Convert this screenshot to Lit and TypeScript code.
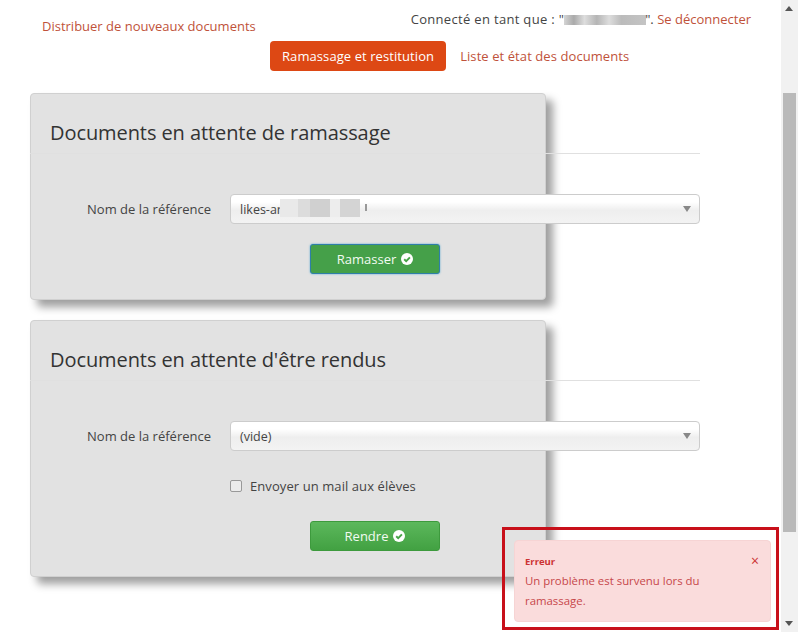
import { LitElement, html, css, svg } from "lit";
import { customElement } from "lit/decorators.js";

const check = svg`<svg class="chk" viewBox="0 0 12 12" width="12" height="12" aria-hidden="true"><circle cx="6" cy="6" r="6" fill="#fff"/><path d="M3.2 6.2 5.2 8.1 8.9 4.3" fill="none" stroke="currentColor" stroke-width="1.9"/></svg>`;

@customElement("app-root")
export class AppRoot extends LitElement {
  static styles = css`
    :host { display: block; height: 632px; overflow: hidden; position: relative; background: #fff; font-family: "Open Sans", "Noto Sans", sans-serif; font-size: 13px; color: #444; }
    * { box-sizing: border-box; }
    a { color: #c0523a; text-decoration: none; }
    .page { width: 781px; padding: 0 30px; }
    .top { display: flex; justify-content: space-between; height: 41px; }
    .top .left { margin: 16px 0 0 12px; line-height: 20px; }
    .top .right { margin: 9px 0 0; line-height: 20px; white-space: nowrap; }
    .who { letter-spacing: 0.32px; }
    .blur { display: inline-block; width: 82px; height: 10px; vertical-align: -1px; margin-right: -1px; background: linear-gradient(90deg,#d4d4d4,#aaa 12%,#ddd 25%,#b5b5b5 40%,#ddd 55%,#bbb 70%,#c4c4c4 100%); }
    .nav { display: flex; align-items: center; margin-left: 240px; height: 30px; gap: 14px; letter-spacing: 0.08px; }
    .pill { background: #dd4814; color: #fff; border-radius: 4px; height: 30px; padding: 0 12px; display: flex; align-items: center; }
    .form { position: relative; width: 670px; }
    .form.one { margin-top: 22px; height: 227px; }
    .form.two { height: 257px; }
    .card { position: absolute; left: 0; top: 0; width: 516px; background: #e2e2e2; border: 1px solid #d0d0d0; border-radius: 4px; box-shadow: 7px 7px 8px rgba(0,0,0,.38); }
    .one .card { height: 207px; }
    .two .card { height: 257px; }
    .body { position: relative; display: flex; flex-direction: column; }
    h2 { margin: 0; padding: 22px 0 0 20px; height: 61px; border-bottom: 1px solid #e0e0e0; font-weight: 400; font-size: 20px; line-height: 36px; color: #333; letter-spacing: -0.08px; }
    .row { display: flex; align-items: center; margin-top: 40px; height: 30px; }
    .row label { width: 200px; text-align: right; padding-right: 19px; flex: none; }
    .sel { flex: 1; height: 30px; border: 1px solid #ccc; border-radius: 4px; background: linear-gradient(#fff 25%, #eee 55%, #f3f3f3); padding: 0 8px 0 9px; display: flex; align-items: center; justify-content: space-between; font-size: 12.5px; position: relative; }
    .mask { position: absolute; left: 49px; top: 4px; width: 80px; height: 18px; background: linear-gradient(90deg,#e9e9e9 0 22%,#dcdcdc 22% 38%,#d0d0d0 38% 62%,#ededed 62% 75%,#d4d4d4 75%); }
    .mask::after { content: ""; position: absolute; left: 85px; top: 5px; width: 2px; height: 7px; background: #999; }
    .caret { width: 0; height: 0; border: 4px solid transparent; border-top: 6px solid #888; border-bottom: 0; }
    .chkrow { display: flex; align-items: center; gap: 8px; margin: 25px 0 0 200px; height: 20px; letter-spacing: 0.08px; }
    .box { width: 12px; height: 12px; border: 1px solid #999; border-radius: 2px; background: #ececec; }
    .act { margin-left: 280px; }
    .btn { width: 130px; height: 30px; border-radius: 3px; color: #f2fbf2; display: flex; align-items: center; justify-content: center; gap: 5px; background: linear-gradient(#5cb85c, #42a142); border: 1px solid #3d9a3d; }
    .btn .chk { color: #46a346; }
    .focus { background: #45a049; border: 1px solid #2f7fa8; box-shadow: 0 0 2px #4aa3d0; }
    .one .act { margin-top: 20px; }
    .two .act { margin-top: 25px; }
    .scroll { position: absolute; right: 0; top: 0; width: 17px; height: 632px; background: #f1f1f1; }
    .thumb { position: absolute; left: 2px; top: 93px; width: 13px; height: 439px; background: #b9b9b9; }
    .up, .down { position: absolute; left: 4px; width: 0; height: 0; border: 4px solid transparent; }
    .up { top: 6px; border-top: 0; border-bottom: 5px solid #555; }
    .down { bottom: 6px; border-bottom: 0; border-top: 5px solid #555; }
    .callout { position: absolute; left: 502px; top: 527px; width: 277px; height: 103px; border: 3px solid #c8101a; }
    .toast { position: absolute; left: 9px; top: 10px; width: 257px; height: 82px; padding: 10px 10px; background: #fadcdc; border: 1px solid #f6d4d4; border-radius: 4px; color: #c7474a; font-size: 11.4px; line-height: 20px; }
    .toast b { display: block; font-size: 9.5px; line-height: 19px; padding-top: 1px; font-weight: 700; color: #c33; }
    .x { position: absolute; right: 11px; top: 10px; font-size: 14px; line-height: 20px; color: #c33; }
  `;

  render() {
    return html`
      <div class="page">
        <div class="top">
          <a class="left" href="#">Distribuer de nouveaux documents</a>
          <div class="right"><span class="who">Connecté en tant que : "</span><span class="blur"></span>". <a href="#">Se déconnecter</a></div>
        </div>
        <div class="nav"><a class="pill" href="#">Ramassage et restitution</a><a href="#">Liste et état des documents</a></div>
        <section class="form one">
          <div class="card"></div>
          <div class="body">
            <h2>Documents en attente de ramassage</h2>
            <div class="row"><label>Nom de la référence</label><div class="sel"><span>likes-ar</span><i class="mask"></i><i class="caret"></i></div></div>
            <div class="act"><div class="btn focus">Ramasser ${check}</div></div>
          </div>
        </section>
        <section class="form two">
          <div class="card"></div>
          <div class="body">
            <h2>Documents en attente d'être rendus</h2>
            <div class="row"><label>Nom de la référence</label><div class="sel"><span>(vide)</span><i class="caret"></i></div></div>
            <div class="chkrow"><i class="box"></i><span>Envoyer un mail aux élèves</span></div>
            <div class="act"><div class="btn">Rendre ${check}</div></div>
          </div>
        </section>
      </div>
      <div class="scroll"><i class="up"></i><i class="thumb"></i><i class="down"></i></div>
      <div class="callout"><div class="toast"><b>Erreur</b>Un problème est survenu lors du<br />ramassage.<span class="x">×</span></div></div>
    `;
  }
}
